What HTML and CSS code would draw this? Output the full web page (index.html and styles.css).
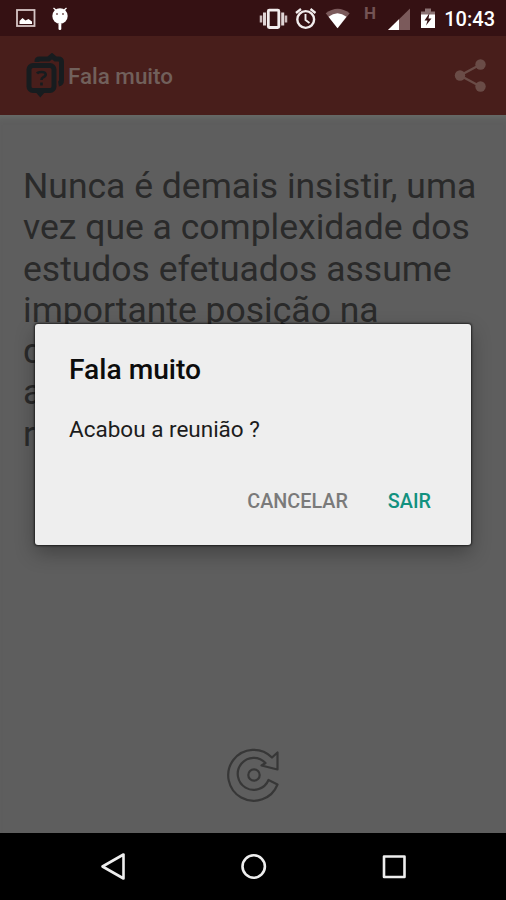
FILE: index.html
```html
<!DOCTYPE html>
<html lang="pt-BR">
<head>
    <meta charset="UTF-8">
    <meta name="viewport" content="width=device-width, initial-scale=1.0">
    <title>Fala muito</title>
    <link rel="stylesheet" href="styles.css">
</head>
<body>
    <div class="status-bar">
        <svg class="status-icons" width="440" height="36" viewBox="0 0 440 36">
            <!-- imagem -->
            <rect x="17" y="10" width="17.500" height="16" fill="none" stroke="#d5c5c5" stroke-width="1.800"/>
            <path d="M19.500 24v-3l3-3 3 2.500 3-1.500 3.500 2.500v2.500z" fill="#fff"/>
            <!-- android -->
            <g fill="#fff">
                <circle cx="60" cy="16" r="7.700"/>
                <path d="M53.500 8l3.500 3M66.500 8l-3.500 3" stroke="#fff" stroke-width="1.300"/>
                <rect x="58.500" y="23" width="2.800" height="7" rx="1.200"/>
            </g>
            <circle cx="57" cy="14" r="0.900" fill="#6a4a4a"/>
            <circle cx="63" cy="14" r="0.900" fill="#6a4a4a"/>
            <!-- vibrar -->
            <rect x="268.300" y="10.200" width="10.500" height="17.300" rx="1" fill="none" stroke="#f2eded" stroke-width="2.800"/>
            <path d="M264.500 12.500v13M282.700 12.500v13" stroke="#e0d5d5" stroke-width="3"/>
            <path d="M261 15.500v7M286 15.500v7" stroke="#cbbcbc" stroke-width="2.500"/>
            <!-- alarme -->
            <g fill="none" stroke="#f2eded" stroke-width="2.400">
                <circle cx="305.700" cy="19.500" r="8.400"/>
                <path d="M305.500 14v6l4 3" stroke-width="1.900"/>
                <path d="M296 13l5-4M315.500 13l-5-4" stroke-width="2.300"/>
            </g>
            <!-- wifi -->
            <path d="M325.700 13.200q12-9 24 0L337.700 28.200z" fill="#7b5a5b"/>
            <path d="M328.500 16.800q9-7 18 0l-9 11.400z" fill="#fff"/>
            <!-- sinal -->
            <path d="M410 8.500V30H388z" fill="#7b5a5b"/>
            <path d="M399 19.200V30h-11z" fill="#fff"/>
            <!-- bateria -->
            <path d="M421 11.500h4V8.500h6v3h4V15h-14z" fill="#8b7273"/>
            <path d="M421 14.500h14V28h-14z" fill="#fff"/>
            <path d="M429.500 13l-5 7.500h3l-1.500 5 5.500-7h-3z" fill="#351113"/>
        </svg>
        <span class="network">H</span>
        <span class="clock">10:43</span>
    </div>

    <div class="toolbar">
        <svg class="logo" width="42" height="46" viewBox="0 0 42 46">
            <path d="M12 9V8q0-2 2.500-2h9l3.500-3 3.500 3h3q3 0 3 3v18q0 3.500-3 4" fill="none" stroke="#171c1f" stroke-width="5"/>
            <rect x="4" y="12.500" width="25" height="25" rx="4" fill="none" stroke="#171c1f" stroke-width="5"/>
            <path d="M10.500 39h9.500l-4.700 5.500z" fill="#171c1f"/>
            <path d="M12 20.500q1-1.500 4.500-1.500 4.200 0 4.200 2.500 0 1.800-2.600 2.800-1.600 0.800-1.600 2.700M16.500 29.500v3" fill="none" stroke="#171c1f" stroke-width="2.600"/>
        </svg>
        <h1 class="toolbar-title">Fala muito</h1>
        <svg class="share" width="34" height="36" viewBox="0 0 34 36">
            <path d="M26.500 6.500L6 17.500l20.500 11" fill="none" stroke="#6a4c47" stroke-width="2.300"/>
            <g fill="#6a4c47">
                <circle cx="26.500" cy="6.500" r="5.200"/>
                <circle cx="6" cy="17.500" r="5.200"/>
                <circle cx="26.500" cy="28.500" r="5.200"/>
            </g>
        </svg>
    </div>

    <div class="content">
        <p class="phrase">Nunca é demais insistir, uma<br>vez que a complexidade dos<br>estudos efetuados assume<br>importante posição na<br>d<br>a<br>r</p>
        <svg class="refresh" width="60" height="60" viewBox="0 0 60 60" fill="none" stroke="#373737" stroke-width="2.200" stroke-linejoin="round">
            <path d="M54.500 39.500A25.500 25.500 0 1 1 49 12.500L54.500 7.500V24.500L38.500 20.500L42.500 18A16 16 0 1 0 45.500 35Z"/>
            <circle cx="31" cy="30" r="5.700"/>
        </svg>
    </div>

    <div class="nav-bar">
        <svg width="506" height="67" viewBox="0 0 506 67" fill="none" stroke="#eee" stroke-width="2.600" stroke-linejoin="round">
            <path d="M102.500 33.500L123.500 21.500V45.500Z"/>
            <circle cx="253.700" cy="33.500" r="11.200"/>
            <rect x="384" y="23.500" width="20.500" height="20.500"/>
        </svg>
    </div>

    <div class="dialog">
        <h2 class="dialog-title">Fala muito</h2>
        <p class="dialog-message">Acabou a reunião ?</p>
        <div class="dialog-buttons">
            <button class="button">CANCELAR</button>
            <button class="button button-exit">SAIR</button>
        </div>
    </div>
</body>
</html>
```
FILE: styles.css
```css
* {
    box-sizing: border-box;
}
body {
    font-family: Roboto, sans-serif;
    margin: 0;
    height: 900px;
    display: flex;
    flex-direction: column;
    background: #5e5e5e;
    position: relative;
    overflow: hidden;
}
h1, h2, p {
    margin: 0;
}
.status-bar {
    height: 36px;
    background: #351113;
    display: flex;
    align-items: center;
    justify-content: flex-end;
    padding-right: 11px;
    position: relative;
}
.status-icons {
    position: absolute;
    left: 0;
    top: 0;
}
.network {
    position: absolute;
    left: 364px;
    top: 3px;
    font-size: 17px;
    line-height: 20px;
    font-weight: 700;
    color: #745354;
}
.clock {
    font-size: 20px;
    font-weight: 500;
    line-height: 36px;
    padding-top: 2px;
    color: #fff;
}
.toolbar {
    height: 79px;
    background: #481e1b;
    display: flex;
    align-items: center;
    padding: 0 18px 0 25px;
}
.toolbar-title {
    font-size: 22.4px;
    font-weight: 500;
    color: #71605b;
    margin-left: 1px;
    padding-top: 1px;
    flex: 1;
}
.content {
    flex: 1;
    padding: 51px 23px 28px;
    display: flex;
    flex-direction: column;
    align-items: center;
    justify-content: space-between;
    box-shadow: inset 0 7px 7px -6px #6b716b;
}
.phrase {
    align-self: stretch;
    font-size: 35.5px;
    line-height: 41.3px;
    color: #2a2a2a;
    white-space: nowrap;
}
.nav-bar {
    height: 67px;
    background: #000;
}
.dialog {
    position: absolute;
    left: 35px;
    top: 324px;
    width: 436px;
    height: 221px;
    padding: 28px 20px 22px 34px;
    background: #eee;
    border-radius: 3px;
    box-shadow: 0 0 2px 1px rgba(0, 0, 0, 0.6), 0 8px 20px rgba(0, 0, 0, 0.3);
    display: flex;
    flex-direction: column;
}
.dialog-title {
    font-size: 28.2px;
    font-weight: 500;
    line-height: 36px;
    color: #0c0c0c;
}
.dialog-message {
    font-size: 22.5px;
    line-height: 28px;
    margin-top: 27px;
    color: #1c1c1c;
}
.dialog-buttons {
    display: flex;
    justify-content: flex-end;
    margin-top: auto;
}
.button {
    background: none;
    border: none;
    padding: 0 20px;
    height: 44px;
    font-family: inherit;
    font-size: 19.8px;
    font-weight: 500;
    color: #7a7a7a;
    cursor: pointer;
}
.button-exit {
    color: #12917f;
}
```
